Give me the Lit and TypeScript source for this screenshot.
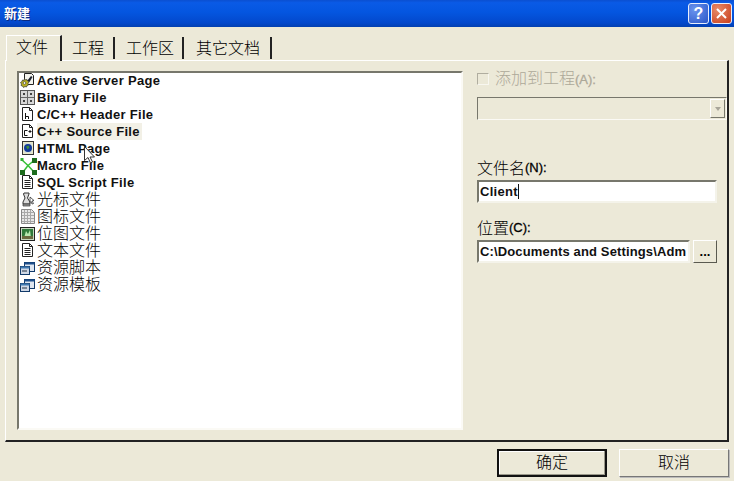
import { LitElement, html, css, svg } from "lit";
import { customElement } from "lit/decorators.js";

const page = (inner: unknown) => svg`<path d="M3.500 1.500h7l3 3v10h-10z" fill="#fff" stroke="#222"/><path d="M10.500 1.500v3h3" fill="none" stroke="#222"/>${inner}`;

const icons: Record<string, unknown> = {
  asp: svg`<path d="M5.500 1.500h7l2 2v9h-9z" fill="#f4f4ee" stroke="#222"/><path d="M8 9l4-5 1.500 1-3 5z" fill="#1c2230"/><path d="M5.500 6.500l1 1.500 1.500-.5.500 1.500 1.500 1-1 1.500.5 1.500-1.500.5-.5 1.500-1.500-.5-1.500 1-1-1.500-1.500-.5.500-1.500-1-1.500 1.500-1 .5-1.500 1.500.5z" fill="#b8b020" stroke="#333" stroke-width=".7"/><circle cx="5.500" cy="11" r="1.300" fill="#fff" stroke="#333" stroke-width=".6"/>`,
  bin: svg`<rect x="1.500" y="1.500" width="14" height="14" fill="#d8d8d8" stroke="#555"/><path d="M8.500 2v13M2 8.500h13" stroke="#666"/><path d="M5 4v2M12 4v2M5 11v2M12 11v2" stroke="#111" stroke-width="1.500"/>`,
  h: page(svg`<path d="M6.500 7v6M6.500 10.500h3v2.500" fill="none" stroke="#111"/>`),
  cpp: page(svg`<path d="M8.500 7.500h-3v5h3M11 7v3M9.500 8.500h3" fill="none" stroke="#111"/>`),
  html: svg`<rect x="3.500" y="1.500" width="11" height="13" fill="#e8e8c8" stroke="#333"/><rect x="5" y="3" width="8" height="10" fill="#d8e0d8"/><circle cx="9" cy="8" r="4" fill="#123a9a"/><path d="M7 6.500l2.500-1 1 2-2 2z" fill="#3f8f3f"/>`,
  macro: svg`<path d="M3 3l6 5.500M9 8.500l6-5M9 8.500L4 15M9 8.500l6 6.500" stroke="#35c035" stroke-width="1.500" fill="none"/><rect x="1.500" y="1" width="3" height="3" fill="#30b030"/><rect x="13" y="1" width="5" height="5" fill="#1c6b1c"/><rect x="1" y="13" width="5" height="5" fill="#1c6b1c"/><rect x="13" y="13" width="5" height="5" fill="#1c6b1c"/>`,
  txt: page(svg`<path d="M5.500 6.500h6M5.500 8.500h6M5.500 10.500h6M5.500 12.500h6" stroke="#222"/>`),
  cur: svg`<path d="M5 2h5v1L8.500 7 11 11v2H4v-2l2-4-1.500-4z" fill="#dcdcdc" stroke="#333"/><path d="M4 13h7v2H4z" fill="#999" stroke="#333" stroke-width=".7"/><path d="M11 6l4 3.500-2 .5 1.500 2.500-1.500.5-1-2.500-1 1z" fill="#fff" stroke="#333" stroke-width=".8"/>`,
  ico: svg`<path d="M2.500 1.500h10l3 3v11h-13z" fill="#e8e8e8" stroke="#888"/><path d="M5.500 2v13M8.500 2v13M11.500 2v13M3 4.500h12M3 7.500h12M3 10.500h12M3 13.500h12" stroke="#a8a8a8"/>`,
  bmp: svg`<rect x="1.500" y="2.500" width="14" height="13" fill="#c8d8c0" stroke="#222"/><rect x="3" y="4" width="11" height="10" fill="#2f7a3a"/><path d="M5 13l2-7 2 3 2-4 1 8z" fill="#b8e8b0"/><rect x="3" y="11" width="11" height="3" fill="#6a6a40"/>`,
  res: svg`<rect x="5.500" y="3.500" width="10" height="9" fill="#dfe6f0" stroke="#123a6a"/><rect x="5.500" y="3.500" width="10" height="2" fill="#1d4f8c"/><rect x="1.500" y="7.500" width="9" height="8" fill="#cfd8e6" stroke="#123a6a"/><rect x="1.500" y="7.500" width="9" height="2" fill="#3f78b0"/><path d="M3 12h5" stroke="#234"/>`,
};

const rows: [string, string, boolean][] = [
  ["asp", "Active Server Page", true],
  ["bin", "Binary File", true],
  ["h", "C/C++ Header File", true],
  ["cpp", "C++ Source File", true],
  ["html", "HTML Page", true],
  ["macro", "Macro File", true],
  ["txt", "SQL Script File", true],
  ["cur", "光标文件", false],
  ["ico", "图标文件", false],
  ["bmp", "位图文件", false],
  ["txt", "文本文件", false],
  ["res", "资源脚本", false],
  ["res", "资源模板", false],
];

const tabs = ["工程", "工作区", "其它文档"];

@customElement("app-root")
export class AppRoot extends LitElement {
  static styles = css`
    :host {
      display: flex;
      flex-direction: column;
      width: 734px;
      height: 481px;
      overflow: hidden;
      background: #ece9d8;
      font-family: "Noto Sans CJK SC", "Liberation Sans", sans-serif;
      color: #000;
    }
    .title {
      height: 27px;
      flex: none;
      box-sizing: border-box;
      display: flex;
      align-items: center;
      justify-content: space-between;
      padding: 0 2px 0 4px;
      background: linear-gradient(180deg, #0b4fd0 0, #0a5ae6 10%, #0456e0 45%, #0348cc 85%, #0340b0 100%);
    }
    .title-text {
      color: #fff;
      font-size: 13px;
      font-weight: 700;
      line-height: 13px;
      margin-bottom: 3px;
      text-shadow: 1px 1px 0 #0a2a80;
    }
    .ctrls { display: flex; gap: 2px; }
    .ctrl {
      width: 21px;
      height: 21px;
      box-sizing: border-box;
      border: 1px solid #e8eefc;
      border-radius: 3px;
      color: #fff;
      display: flex;
      align-items: center;
      justify-content: center;
      font: 700 16px "Liberation Sans", sans-serif;
    }
    .help { background: radial-gradient(circle at 30% 30%, #6a94ee, #2a56c8); }
    .close { background: radial-gradient(circle at 30% 30%, #e88a68, #c83e1c); }
    .body {
      flex: 1;
      display: flex;
      flex-direction: column;
      padding: 8px 5px 0 5px;
      min-height: 0;
    }
    .tabs {
      display: flex;
      height: 25px;
      flex: none;
      padding-left: 1px;
      font-size: 16px;
      font-weight: 300;
      position: relative;
      z-index: 1;
    }
    .tab {
      box-sizing: border-box;
      padding: 0 0 3px 9px;
      display: flex;
      align-items: center;
      border-right: 2px solid #222;
      margin-top: 2px;
      height: 22px;
    }
    .tab.first {
      margin-top: 0;
      height: 26px;
      width: 56px;
      padding: 0 0 6px 9px;
      border-left: 1px solid #fff;
      border-top: 1px solid #fff;
      background: #ece9d8;
    }
    .tab.w2 { width: 53px; padding-left: 10px; }
    .tab.w3 { width: 69px; padding-left: 11px; }
    .tab.w4 { width: 88px; padding-left: 12px; }
    .panel {
      height: 382px;
      flex: none;
      box-sizing: border-box;
      border-top: 1px solid #fff;
      border-left: 1px solid #fff;
      border-right: 2px solid #222;
      border-bottom: 2px solid #222;
      display: flex;
      gap: 14px;
      padding: 10px 0 10px 11px;
    }
    .list {
      position: relative;
      width: 446px;
      height: 359px;
      box-sizing: border-box;
      flex: none;
      background: #fff;
      border: 2px solid;
      border-color: #77776c #fbfaf5 #fbfaf5 #77776c;
    }
    .rows { margin-top: -1px; }
    .row {
      height: 17px;
      display: flex;
      align-items: center;
      font-size: 16px;
      font-weight: 300;
      white-space: nowrap;
    }
    .row svg { width: 18px; height: 18px; flex: none; }
    .row .lbl { padding: 0 2px 0 0; line-height: 17px; margin-bottom: 2px; }
    .row .lbl.en {
      font: 700 13px/17px "Liberation Sans", sans-serif;
      letter-spacing: 0.3px;
      color: #111;
      margin-bottom: 0;
    }
    .row.sel .lbl { background: #f2f0e6; }
    .cursor {
      position: absolute;
      left: 65px;
      top: 73px;
      width: 12px;
      height: 18px;
    }
    .side {
      width: 240px;
      flex: none;
      display: flex;
      flex-direction: column;
    }
    .add {
      display: flex;
      align-items: center;
      gap: 6px;
      height: 18px;
      margin-top: -3px;
      font-size: 16px;
      font-weight: 300;
      color: #aca899;
    }
    .cb {
      width: 12px;
      height: 12px;
      margin-top: 3px;
      box-sizing: border-box;
      border: 1px solid #b0ad9f;
      border-right-color: #f8f7f0;
      border-bottom-color: #f8f7f0;
    }
    .u { font: 400 13px "Liberation Sans", sans-serif; -webkit-text-stroke: 0.3px currentColor; }
    .combo {
      margin-top: 11px;
      height: 23px;
      box-sizing: border-box;
      width: 250px;
      border: 1px solid;
      border-color: #77776c #fbfaf5 #fbfaf5 #77776c;
      display: flex;
      justify-content: flex-end;
      align-items: stretch;
      padding: 1px;
    }
    .arrow {
      width: 15px;
      background: #ece9d8;
      border-right: 1px solid #77776c;
      border-bottom: 1px solid #77776c;
      border-left: 1px solid #fff;
      border-top: 1px solid #fff;
      display: flex;
      align-items: center;
      justify-content: center;
      box-sizing: border-box;
    }
    .arrow i {
      border: 3px solid transparent;
      border-top: 4px solid #a8a599;
      border-bottom: 0;
    }
    .label {
      font-size: 16px;
      font-weight: 300;
      height: 18px;
      display: flex;
      align-items: center;
    }
    .label.file { margin-top: 38px; }
    .label.loc { margin-top: 15px; }
    .input {
      margin-top: 4px;
      box-sizing: border-box;
      height: 23px;
      background: #fff;
      border: 2px solid;
      border-color: #77776c #f4f3ea #f4f3ea #77776c;
      display: flex;
      align-items: center;
      padding-left: 1px;
      font: 700 13px "Liberation Sans", sans-serif;
      letter-spacing: 0.3px;
      color: #111;
      white-space: nowrap;
      overflow: hidden;
    }
    .input.name { width: 240px; }
    .caret { width: 1px; height: 15px; background: #111; }
    .locrow { display: flex; gap: 3px; margin-top: 4px; width: 240px; }
    .locrow .input { margin-top: 0; width: 213px; letter-spacing: 0.14px; }
    .dots {
      width: 24px;
      height: 23px;
      box-sizing: border-box;
      border: 1px solid;
      border-color: #fff #5a5a50 #5a5a50 #fff;
      text-align: center;
      font: 700 13px/21px "Liberation Sans", sans-serif;
      background: #ece9d8;
    }
    .footer {
      display: flex;
      justify-content: flex-end;
      gap: 12px;
      padding: 7px 0 0 0;
      font-size: 16px;
      font-weight: 300;
    }
    .btn {
      width: 110px;
      height: 28px;
      box-sizing: border-box;
      display: flex;
      align-items: center;
      justify-content: center;
      padding-bottom: 4px;
      background: #ece9d8;
      border: 1px solid;
      border-color: #fff #777 #777 #fff;
      box-shadow: 1px 1px 0 #bbb;
    }
    .btn.def { border: 2px solid #111; box-shadow: inset -1px -1px 0 #9a988a, inset 1px 1px 0 #fff; }
  `;

  render() {
    return html`
      <div class="title">
        <span class="title-text">新建</span>
        <div class="ctrls">
          <div class="ctrl help">?</div>
          <div class="ctrl close">
            <svg width="13" height="13" viewBox="0 0 13 13"><path d="M2 2l9 9M11 2l-9 9" stroke="#fff" stroke-width="2"/></svg>
          </div>
        </div>
      </div>
      <div class="body">
        <div class="tabs">
          <div class="tab first">文件</div>
          ${tabs.map((t, i) => html`<div class="tab w${i + 2}">${t}</div>`)}
        </div>
        <div class="panel">
          <div class="list">
            <div class="rows">
              ${rows.map(
                ([ic, t, en], i) => html`<div class="row ${i === 3 ? "sel" : ""}">
                  <svg viewBox="0 0 18 18">${icons[ic]}</svg>
                  <span class="lbl ${en ? "en" : ""}">${t}</span>
                </div>`
              )}
            </div>
            <svg class="cursor" viewBox="0 0 12 18"><path d="M.5.500v14l3.500-3 2.500 5.500 2-1-2.500-5h4.500z" fill="#fff" stroke="#333"/></svg>
          </div>
          <div class="side">
            <div class="add"><span class="cb"></span><span>添加到工程<span class="u">(A):</span></span></div>
            <div class="combo"><div class="arrow"><i></i></div></div>
            <div class="label file"><span>文件名</span><span class="u">(N):</span></div>
            <div class="input name">Client<span class="caret"></span></div>
            <div class="label loc"><span>位置</span><span class="u">(C):</span></div>
            <div class="locrow">
              <div class="input">C:\\Documents and Settings\\Adm</div>
              <div class="dots">...</div>
            </div>
          </div>
        </div>
        <div class="footer">
          <div class="btn def">确定</div>
          <div class="btn">取消</div>
        </div>
      </div>
    `;
  }
}
